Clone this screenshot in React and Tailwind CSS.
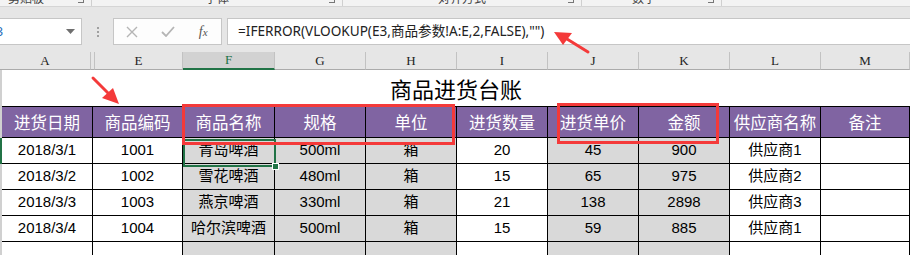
import React from 'react'

const GRID = 'grid grid-cols-[91px_90px_92px_91px_91px_91px_91px_91px_91px_89px]'
const HEAD = ['进货日期', '商品编码', '商品名称', '规格', '单位', '进货数量', '进货单价', '金额', '供应商名称', '备注']
const ROWS = [
  ['2018/3/1', '1001', '青岛啤酒', '500ml', '箱', '20', '45', '900', '供应商1', ''],
  ['2018/3/2', '1002', '雪花啤酒', '480ml', '箱', '15', '65', '975', '供应商2', ''],
  ['2018/3/3', '1003', '燕京啤酒', '330ml', '箱', '21', '138', '2898', '供应商3', ''],
  ['2018/3/4', '1004', '哈尔滨啤酒', '500ml', '箱', '15', '59', '885', '供应商1', ''],
  ['', '', '', '', '', '', '', '', '', ''],
]
// columns with gray fill: F G H J K
const GRAY = [false, false, true, true, true, false, true, true, false, false]

const COLHEAD = [
  { l: 'A', w: 'w-[91px]' },
  { l: '', w: 'w-[3px]', gap: true },
  { l: 'E', w: 'w-[89px]', first: true },
  { l: 'F', w: 'w-[92px]', sel: true },
  { l: 'G', w: 'w-[91px]' },
  { l: 'H', w: 'w-[91px]' },
  { l: 'I', w: 'w-[91px]' },
  { l: 'J', w: 'w-[91px]' },
  { l: 'K', w: 'w-[91px]' },
  { l: 'L', w: 'w-[91px]' },
  { l: 'M', w: 'flex-1' },
]

const GROUPS = [
  { t: '剪贴板', w: 'w-[92px]', pad: 'pl-[8px] justify-start' },
  { t: '字体', w: 'w-[251px]', pad: 'justify-center' },
  { t: '对齐方式', w: 'w-[239px]', pad: 'justify-center' },
  { t: '数字', w: 'w-[140px]', pad: 'pl-[50px] justify-start' },
]

function Ribbon() {
  return (
    <div className="flex h-[7px] overflow-hidden bg-[#f3f3f3] border-b border-[#d5d5d5]">
      {GROUPS.map((g) => (
        <div key={g.t} className={`${g.w} relative flex ${g.pad} border-r border-[#d0d0d0]`}>
          <span className="text-[12px] leading-[12px] -mt-[7px] text-[#444]">{g.t}</span>
          <span className="absolute right-[7px] -top-[3px] w-[6px] h-[6px] border-r border-b border-[#777]" />
        </div>
      ))}
      <div className="flex-1" />
    </div>
  )
}

function FormulaBar() {
  return (
    <div className="flex items-stretch h-[38px] pt-[11px] bg-[#e6e6e6]">
      <div className="w-[82px] h-[27px] bg-white border border-[#c6c6c6] border-l-0 flex items-center justify-between pr-[6px] overflow-hidden">
        <span className="text-[13px] text-[#2a6ebb] -ml-[11px]">F3</span>
        <svg width="9" height="5" viewBox="0 0 9 5"><path d="M0 0h9L4.5 5z" fill="#6f6f6f" /></svg>
      </div>
      <div className="w-[31px] flex flex-col items-center justify-center gap-[2px]">
        <span className="w-[2px] h-[2px] bg-[#a0a0a0]" />
        <span className="w-[2px] h-[2px] bg-[#a0a0a0]" />
        <span className="w-[2px] h-[2px] bg-[#a0a0a0]" />
      </div>
      <div className="w-[109px] h-[27px] bg-[#fdfdfd] border border-[#c6c6c6] flex items-center">
        <div className="w-[36px] flex justify-center">
          <svg width="12" height="12" viewBox="0 0 12 12"><path d="M1 1l10 10M11 1L1 11" stroke="#b5b5b5" strokeWidth="1.4" /></svg>
        </div>
        <div className="w-[36px] flex justify-center">
          <svg width="14" height="11" viewBox="0 0 14 11"><path d="M1 6l4 4 8-9" stroke="#b5b5b5" strokeWidth="1.8" fill="none" /></svg>
        </div>
        <div className="w-[36px] flex justify-center">
          <span className="text-[14px] italic text-[#555] font-['Liberation_Serif',serif]">f<span className="text-[11px]">x</span></span>
        </div>
      </div>
      <div className="w-[5px]" />
      <div className="flex-1 h-[27px] bg-white border border-[#c6c6c6] border-r-0 flex items-center pl-[10px]">
        <span className="text-[13.6px] text-[#222] font-['Noto_Sans','Noto_Sans_CJK_SC',sans-serif]">=IFERROR(VLOOKUP(E3,商品参数!A:E,2,FALSE),"")</span>
      </div>
    </div>
  )
}

function ColumnHeads() {
  return (
    <div className="flex h-[25px] bg-[#e6e6e6] pt-[7px]">
      {COLHEAD.map((c, i) => (
        <div
          key={i}
          className={`${c.w} h-[18px] flex items-center justify-center text-[13px] font-['Liberation_Serif',serif] ${
            c.gap ? '' : 'border-r border-[#c2c2c2]'
          } ${c.first ? 'border-l border-l-[#c2c2c2]' : ''} ${
            c.sel ? 'bg-[#d2d2d2] text-[#217346] border-b-2 border-b-[#217346]' : 'text-[#222] border-b border-b-[#ababab]'
          }`}
        >
          {c.l}
        </div>
      ))}
    </div>
  )
}

function Sheet() {
  return (
    <div className="bg-white font-['Liberation_Sans','Noto_Sans_CJK_SC',sans-serif] text-black">
      <div className="h-[36px] border-l-2 border-[#d0d0d0] flex items-center justify-center">
        <span className="text-[22px] leading-none font-['Noto_Sans_CJK_SC',sans-serif]">商品进货台账</span>
      </div>
      <div className={`${GRID} h-[32px] border-l-2 border-[#d0d0d0] bg-[#8064a2]`}>
        {HEAD.map((h) => (
          <div
            key={h}
            className="border-t border-r border-b border-black flex items-center justify-center text-white text-[16.5px] font-['Noto_Sans_CJK_SC',sans-serif]"
          >
            {h}
          </div>
        ))}
      </div>
      {ROWS.map((r, ri) => (
        <div
          key={ri}
          className={`${GRID} h-[26px] border-l-2 ${ri === 0 ? 'border-[#217346]' : 'border-[#d0d0d0]'}`}
        >
          {r.map((v, ci) => (
            <div
              key={ci}
              className={`border-r border-b border-black flex items-center justify-center text-[15px] ${
                GRAY[ci] ? 'bg-[#d9d9d9]' : 'bg-white'
              }`}
            >
              {v}
            </div>
          ))}
        </div>
      ))}
    </div>
  )
}

export default function App() {
  return (
    <div className="relative w-[910px] h-[255px] overflow-hidden bg-[#e6e6e6] font-['Noto_Sans','Noto_Sans_CJK_SC',sans-serif]">
      <Ribbon />
      <FormulaBar />
      <ColumnHeads />
      <Sheet />

      {/* selected cell F3 */}
      <div className="absolute left-[183px] top-[139px] w-[93px] h-[28px] border-2 border-[#217346]" />
      <div className="absolute left-[272px] top-[163px] w-[7px] h-[7px] bg-[#217346] border border-white" />

      {/* red annotation boxes */}
      <div className="absolute left-[182px] top-[104px] w-[273px] h-[41px] border-[3px] border-[#f43a3a]" />
      <div className="absolute left-[557px] top-[103px] w-[162px] h-[41px] border-[3px] border-[#f43a3a]" />

      {/* red arrows */}
      <svg className="absolute left-0 top-0 pointer-events-none" width="910" height="255" viewBox="0 0 910 255">
        <path d="M93 78 L110 95" stroke="#f43a3a" strokeWidth="3" strokeLinecap="round" />
        <path d="M119 104 L102 98 L113 88 Z" fill="#f43a3a" />
        <path d="M588 52 L567 39" stroke="#f43a3a" strokeWidth="3" strokeLinecap="round" />
        <path d="M554 32 L572 33 L563 45 Z" fill="#f43a3a" />
      </svg>
    </div>
  )
}
